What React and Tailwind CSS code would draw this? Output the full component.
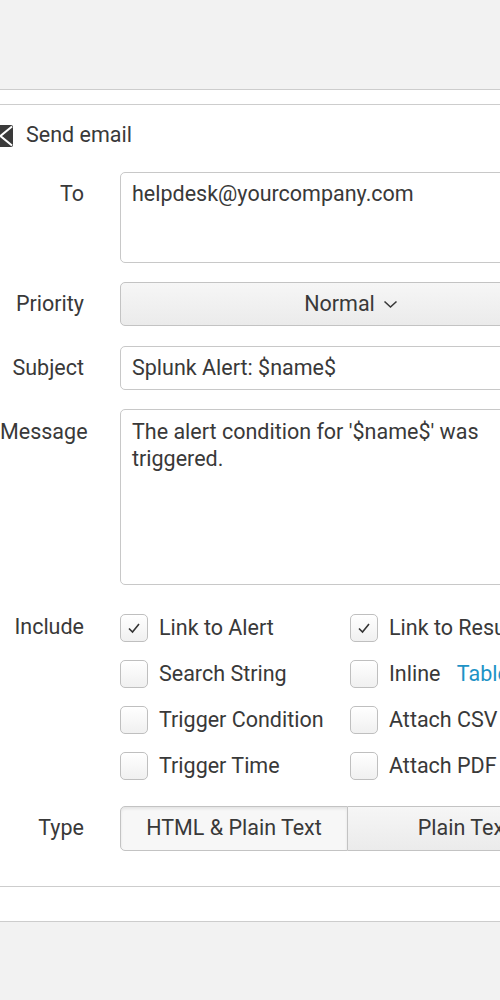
import React from 'react';

const font = { fontFamily: 'Roboto, "Liberation Sans", sans-serif' };

const Check = () => (
  <svg width="14" height="12" viewBox="0 0 14 12" className="text-[#333]">
    <polyline points="2,6.5 5.5,10 12,2" fill="none" stroke="currentColor" strokeWidth="1.6" />
  </svg>
);

const Checkbox = ({ checked, children }) => (
  <div className="flex items-center h-[28px]">
    <div className="w-[28px] h-[28px] rounded-[5px] border border-[#bfbfbf] bg-gradient-to-b from-white to-[#f0f0f0] flex items-center justify-center shrink-0">
      {checked && <Check />}
    </div>
    <span className="ml-[11px] whitespace-nowrap">{children}</span>
  </div>
);

const Label = ({ children, className = '' }) => (
  <div className={`w-[84px] shrink-0 text-right whitespace-nowrap ${className}`}>{children}</div>
);

export default function App() {
  return (
    <div style={font} className="w-[500px] h-[1000px] overflow-hidden bg-[#f2f2f2] text-[21.5px] text-[#393939] flex flex-col">
      <div className="h-[89px] shrink-0" />
      <div className="border-t border-[#cdcdcd] bg-white h-[15px] shrink-0" />
      <div className="border-t border-[#cdcdcd] bg-white pt-[20px] pb-[35px] shrink-0">
        <div className="w-[582px]">
          <div className="flex items-center h-[22px]">
            <svg width="22" height="22" viewBox="0 0 22 22" className="-ml-[9px] shrink-0">
              <rect x="0" y="0" width="22" height="22" rx="2" fill="#3a3a3a" />
              <polyline points="21,1.5 9.5,11 21,20.5" fill="none" stroke="#fff" strokeWidth="2" />
            </svg>
            <span className="ml-[13px] leading-none -mt-[3px]">Send email</span>
          </div>

          <div className="flex gap-[36px] mt-[25px]">
            <Label className="pt-[9px] leading-[26px]">To</Label>
            <div className="flex-1 h-[91px] border border-[#c8c8c8] rounded-[5px] px-[11px] pt-[8px] leading-[26px] bg-white">
              helpdesk@yourcompany.com
            </div>
          </div>

          <div className="flex gap-[36px] mt-[19px] items-center">
            <Label>Priority</Label>
            <div className="flex-1 h-[44px] border border-[#c3c3c3] rounded-[5px] bg-gradient-to-b from-[#f6f6f6] to-[#ebebeb] flex items-center justify-center gap-[8px]">
              <span>Normal</span>
              <svg width="15" height="9" viewBox="0 0 15 9">
                <polyline points="1.5,1.5 7.5,7 13.5,1.5" fill="none" stroke="#393939" strokeWidth="1.6" />
              </svg>
            </div>
          </div>

          <div className="flex gap-[36px] mt-[20px] items-center">
            <Label>Subject</Label>
            <div className="flex-1 h-[44px] border border-[#c8c8c8] rounded-[5px] px-[11px] flex items-center bg-white">
              Splunk Alert: $name$
            </div>
          </div>

          <div className="flex gap-[36px] mt-[19px]">
            <Label className="pt-[9px] leading-[27px]">Message</Label>
            <div className="flex-1 h-[176px] border border-[#c8c8c8] rounded-[5px] px-[11px] pt-[8px] leading-[27px] bg-white">
              The alert condition for '$name$' was<br />triggered.
            </div>
          </div>

          <div className="flex gap-[36px] mt-[29px]">
            <Label className="leading-[26px]">Include</Label>
            <div className="flex">
              <div className="w-[230px] flex flex-col gap-[18px]">
                <Checkbox checked>Link to Alert</Checkbox>
                <Checkbox>Search String</Checkbox>
                <Checkbox>Trigger Condition</Checkbox>
                <Checkbox>Trigger Time</Checkbox>
              </div>
              <div className="flex flex-col gap-[18px]">
                <Checkbox checked>Link to Results</Checkbox>
                <Checkbox>
                  Inline <span className="ml-[11px] text-[#1e93c6]">Table</span>
                </Checkbox>
                <Checkbox>Attach CSV</Checkbox>
                <Checkbox>Attach PDF</Checkbox>
              </div>
            </div>
          </div>

          <div className="flex gap-[36px] mt-[26px] items-center">
            <Label>Type</Label>
            <div className="flex h-[45px]">
              <div className="w-[228px] border border-[#c3c3c3] rounded-l-[5px] bg-[#f7f7f7] shadow-[inset_0_2px_3px_rgba(0,0,0,0.08)] flex items-center justify-center">
                HTML &amp; Plain Text
              </div>
              <div className="w-[234px] border border-l-0 border-[#c3c3c3] rounded-r-[5px] bg-gradient-to-b from-[#f6f6f6] to-[#ebebeb] flex items-center justify-center">
                Plain Text
              </div>
            </div>
          </div>
        </div>
      </div>
      <div className="border-t border-[#cdcdcd] bg-white h-[35px] shrink-0" />
      <div className="border-t border-[#cdcdcd] flex-1" />
    </div>
  );
}
